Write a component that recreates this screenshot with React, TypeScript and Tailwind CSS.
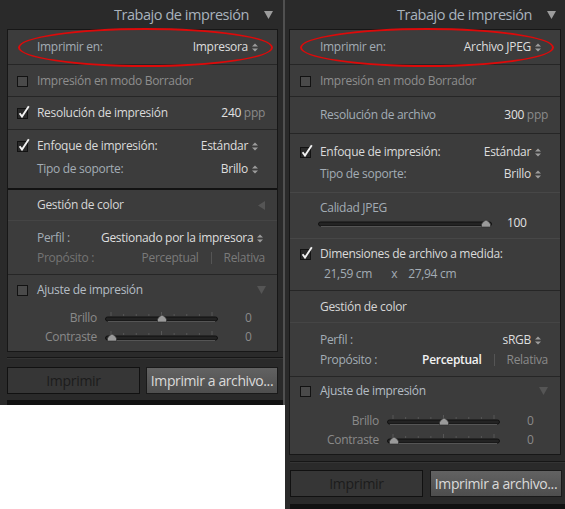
import React from "react";

const font = "font-['Open_Sans','Noto_Sans',sans-serif]";

function UpDown() {
  return (
    <svg width="6" height="9" viewBox="0 0 6 9" className="ml-[4px] shrink-0">
      <path d="M0 3.5 L3 0.5 L6 3.5Z M0 5.5 L3 8.5 L6 5.5Z" fill="#9c9c9c" />
    </svg>
  );
}

function Check({ checked }: { checked: boolean }) {
  return (
    <svg width="16" height="16" viewBox="0 0 16 16" className="shrink-0">
      <rect x="0.5" y="3.5" width="10" height="10" fill={checked ? "#2a2a2a" : "#4a4a4a"} stroke="#121212" />
      {checked && <path d="M2.6 8.2 L5 11.6 L11.8 1.2" stroke="#f2f2f2" strokeWidth="1.9" fill="none" />}
    </svg>
  );
}

function Tri({ dir, color = "#9c9c9c" }: { dir: "down" | "left"; color?: string }) {
  return dir === "down" ? (
    <svg width="9" height="8" viewBox="0 0 9 8" className="shrink-0">
      <path d="M0 0 L9 0 L4.5 8Z" fill={color} />
    </svg>
  ) : (
    <svg width="7" height="9" viewBox="0 0 7 9" className="shrink-0">
      <path d="M7 0 L7 9 L0 4.5Z" fill={color} />
    </svg>
  );
}

function Slider({ width, pos, ticks }: { width: number; pos: number; ticks: boolean }) {
  const tickXs = ticks ? Array.from({ length: 9 }, (_, i) => 6 + i * ((width - 12) / 8)) : [];
  return (
    <svg width={width} height="14" viewBox={`0 0 ${width} 14`} className="shrink-0">
      {tickXs.map((x, i) => (
        <line key={i} x1={x} y1={i % 4 === 0 ? 1 : 3} x2={x} y2={5} stroke="#575757" strokeWidth="1" />
      ))}
      <rect x="0.5" y="6" width={width - 1} height="4" rx="2" fill="#232323" stroke="#111" strokeWidth="1" />
      <line x1="3" y1="10.5" x2={width - 3} y2="10.5" stroke="#555" strokeWidth="1" />
      <path
        d={`M${pos - 4.5} 11 L${pos - 4.5} 8.5 Q${pos - 4} 6 ${pos} 4 Q${pos + 4} 6 ${pos + 4.5} 8.5 L${pos + 4.5} 11Z`}
        fill="#9a9a9a"
        stroke="#2a2a2a"
        strokeWidth="0.6"
      />
    </svg>
  );
}

function Header({ pr }: { pr: number }) {
  return (
    <div className="h-[29px] flex items-center justify-end" style={{ paddingRight: pr }}>
      <span className="text-[14.5px] text-[#a9b3bd] tracking-[-0.45px] mr-[15px] leading-none mt-[1px]">
        Trabajo de impresión
      </span>
      <Tri dir="down" />
    </div>
  );
}

const lbl = "text-[12px] leading-none tracking-[-0.3px]";

function ValueSelect({ text }: { text: string }) {
  return (
    <div className="flex items-center ml-auto mr-[19px]">
      <span className={`${lbl} text-[#dedede]`}>{text}</span>
      <UpDown />
    </div>
  );
}

function SliderRow({ label, pos, mt }: { label: string; pos: number; mt: number }) {
  return (
    <div className="h-[18px] flex items-center" style={{ marginTop: mt }}>
      <span className={`${lbl} text-[#8a8a8a] w-[89px] text-right`}>{label}</span>
      <div className="ml-[8px]">
        <Slider width={113} pos={pos} ticks />
      </div>
      <span className={`${lbl} text-[#8a8a8a] ml-[27px]`}>0</span>
    </div>
  );
}

function Footer({ lineMt, btnMt, gap }: { lineMt: number; btnMt: number; gap: number }) {
  return (
    <div className="flex flex-col flex-1">
      <div className="h-px bg-[#161616]" style={{ marginTop: lineMt }} />
      <div className="h-px bg-[#343434]" />
      <div className="flex" style={{ marginTop: btnMt, gap }}>
        <div className="w-[133px] h-[27px] bg-[#363636] border border-[#111] flex items-center justify-center">
          <span className="text-[14px] text-[#1c1c1c] leading-none tracking-[-0.3px]">Imprimir</span>
        </div>
        <div className="w-[132px] h-[27px] bg-gradient-to-b from-[#626262] to-[#4e4e4e] border border-[#1a1a1a] flex items-center justify-center">
          <span className="text-[14px] text-[#dadada] leading-none tracking-[-0.4px]">Imprimir a archivo...</span>
        </div>
      </div>
      <div className="mt-auto h-[5px] bg-[#111]" />
    </div>
  );
}

const row = "border-t border-[#262626]";

function LeftPanel() {
  return (
    <div className="relative w-[283px] h-[405px] bg-[#2a2a2a] flex flex-col">
      <Header pr={10} />
      <div className="ml-[7px] w-[271px] border border-[#171717] bg-[#3c3c3c] flex flex-col">
        <div className="h-[34px] flex items-center pl-[29px]">
          <span className={`${lbl} text-[#a3acb5]`}>Imprimir en:</span>
          <ValueSelect text="Impresora" />
        </div>
        <div className={`h-[32px] flex items-center pl-[9px] ${row}`}>
          <Check checked={false} />
          <span className={`${lbl} text-[#8e8e8e] ml-[4px]`}>Impresión en modo Borrador</span>
        </div>
        <div className={`h-[33px] flex items-center pl-[9px] ${row}`}>
          <Check checked />
          <span className={`${lbl} text-[#dadada] ml-[4px]`}>Resolución de impresión</span>
          <span className={`ml-auto mr-[12px] ${lbl}`}>
            <span className="text-[#e2e2e2]">240</span>
            <span className="text-[#8a8a8a]"> ppp</span>
          </span>
        </div>
        <div className={`h-[59px] flex flex-col ${row}`}>
          <div className="h-[20px] flex items-center pl-[9px] mt-[6px]">
            <Check checked />
            <span className={`${lbl} text-[#dadada] ml-[4px]`}>Enfoque de impresión:</span>
            <ValueSelect text="Estándar" />
          </div>
          <div className="h-[20px] flex items-center pl-[29px] mt-[3px]">
            <span className={`${lbl} text-[#a3acb5]`}>Tipo de soporte:</span>
            <ValueSelect text="Brillo" />
          </div>
        </div>
        <div className="h-[32px] flex items-center pl-[29px] border-t-2 border-[#121212]">
          <span className={`${lbl} text-[#d6d6d6]`}>Gestión de color</span>
          <div className="ml-auto mr-[12px]">
            <Tri dir="left" color="#555555" />
          </div>
        </div>
        <div className="h-[54px] flex flex-col border-t border-[#454545]">
          <div className="h-[20px] flex items-center pl-[29px] mt-[7px]">
            <span className={`${lbl} text-[#a3acb5] w-[64px]`}>Perfil :</span>
            <span className={`${lbl} text-[#dedede]`}>Gestionado por la impresora</span>
            <UpDown />
          </div>
          <div className="h-[20px] flex items-center pl-[29px]">
            <span className={`${lbl} text-[#747474]`}>Propósito :</span>
            <span className={`${lbl} text-[#7a7a7a] ml-auto`}>Perceptual</span>
            <span className="w-px h-[12px] bg-[#555] mx-[12px]" />
            <span className={`${lbl} text-[#7a7a7a] mr-[12px]`}>Relativa</span>
          </div>
        </div>
        <div className={`h-[77px] flex flex-col ${row}`}>
          <div className="h-[20px] flex items-center pl-[9px] mt-[5px]">
            <Check checked={false} />
            <span className={`${lbl} text-[#b4bcc4] ml-[4px]`}>Ajuste de impresión</span>
            <div className="ml-auto mr-[11px]">
              <Tri dir="down" color="#555555" />
            </div>
          </div>
          <SliderRow label="Brillo" pos={57} mt={9} />
          <SliderRow label="Contraste" pos={7} mt={1} />
        </div>
      </div>
      <div className="pl-[7px] flex flex-col flex-1">
        <Footer lineMt={5} btnMt={8} gap={6} />
      </div>
      <div className="absolute left-[18px] top-[28px] w-[255px] h-[39px] rounded-[50%] border-2 border-[#dd0a0a]" />
    </div>
  );
}

function RightPanel() {
  return (
    <div className="relative w-[280px] h-[509px] bg-[#2a2a2a] flex flex-col">
      <Header pr={9} />
      <div className="ml-[4px] w-[272px] border border-[#171717] bg-[#3c3c3c] flex flex-col">
        <div className="h-[34px] flex items-center pl-[30px]">
          <span className={`${lbl} text-[#a3acb5]`}>Imprimir en:</span>
          <ValueSelect text="Archivo JPEG" />
        </div>
        <div className={`h-[32px] flex items-center pl-[10px] ${row}`}>
          <Check checked={false} />
          <span className={`${lbl} text-[#8e8e8e] ml-[4px]`}>Impresión en modo Borrador</span>
        </div>
        <div className={`h-[37px] flex items-center pl-[30px] ${row}`}>
          <span className={`${lbl} text-[#a3acb5]`}>Resolución de archivo</span>
          <span className={`ml-auto mr-[12px] ${lbl}`}>
            <span className="text-[#e2e2e2]">300</span>
            <span className="text-[#8a8a8a]"> ppp</span>
          </span>
        </div>
        <div className={`h-[59px] flex flex-col ${row}`}>
          <div className="h-[20px] flex items-center pl-[10px] mt-[8px]">
            <Check checked />
            <span className={`${lbl} text-[#dadada] ml-[4px]`}>Enfoque de impresión:</span>
            <ValueSelect text="Estándar" />
          </div>
          <div className="h-[20px] flex items-center pl-[30px] mt-[2px]">
            <span className={`${lbl} text-[#a3acb5]`}>Tipo de soporte:</span>
            <ValueSelect text="Brillo" />
          </div>
        </div>
        <div className="h-[46px] flex flex-col border-t border-[#474747]">
          <div className="h-[16px] flex items-center pl-[30px] mt-[7px]">
            <span className={`${lbl} text-[#a3acb5]`}>Calidad JPEG</span>
          </div>
          <div className="h-[14px] flex items-center pl-[28px]">
            <Slider width={174} pos={168} ticks={false} />
            <span className={`${lbl} text-[#e2e2e2] ml-[15px]`}>100</span>
          </div>
        </div>
        <div className="h-[52px] flex flex-col border-t border-[#474747]">
          <div className="h-[20px] flex items-center pl-[10px] mt-[5px]">
            <Check checked />
            <span className={`${lbl} text-[#dadada] ml-[4px]`}>Dimensiones de archivo a medida:</span>
          </div>
          <div className="h-[20px] flex items-center pl-[34px]">
            <span className={`${lbl} text-[#a3acb5]`}>21,59 cm</span>
            <span className={`${lbl} text-[#a3acb5] ml-[19px]`}>x</span>
            <span className={`${lbl} text-[#a3acb5] ml-[11px]`}>27,94 cm</span>
          </div>
        </div>
        <div className={`h-[32px] flex items-center pl-[30px] ${row}`}>
          <span className={`${lbl} text-[#d6d6d6]`}>Gestión de color</span>
        </div>
        <div className="h-[54px] flex flex-col border-t border-[#454545]">
          <div className="h-[20px] flex items-center pl-[30px] mt-[7px]">
            <span className={`${lbl} text-[#a3acb5]`}>Perfil :</span>
            <ValueSelect text="sRGB" />
          </div>
          <div className="h-[20px] flex items-center pl-[30px]">
            <span className={`${lbl} text-[#a3acb5]`}>Propósito :</span>
            <span className={`${lbl} text-[#f2f2f2] font-semibold ml-auto`}>Perceptual</span>
            <span className="w-px h-[12px] bg-[#555] mx-[12px]" />
            <span className={`${lbl} text-[#8a8a8a] mr-[12px]`}>Relativa</span>
          </div>
        </div>
        <div className={`h-[78px] flex flex-col ${row}`}>
          <div className="h-[20px] flex items-center pl-[10px] mt-[4px]">
            <Check checked={false} />
            <span className={`${lbl} text-[#b4bcc4] ml-[4px]`}>Ajuste de impresión</span>
            <div className="ml-auto mr-[12px]">
              <Tri dir="down" color="#555555" />
            </div>
          </div>
          <SliderRow label="Brillo" pos={57} mt={11} />
          <SliderRow label="Contraste" pos={7} mt={1} />
        </div>
      </div>
      <div className="pl-[5px] flex flex-col flex-1">
        <Footer lineMt={6} btnMt={7} gap={7} />
      </div>
      <div className="absolute left-[15px] top-[28px] w-[254px] h-[39px] rounded-[50%] border-2 border-[#dd0a0a]" />
    </div>
  );
}

export default function App() {
  return (
    <div className={`flex w-[565px] h-[509px] bg-white items-start ${font}`}>
      <LeftPanel />
      <div className="w-[2px] h-[405px] bg-[#505050]" />
      <RightPanel />
    </div>
  );
}
